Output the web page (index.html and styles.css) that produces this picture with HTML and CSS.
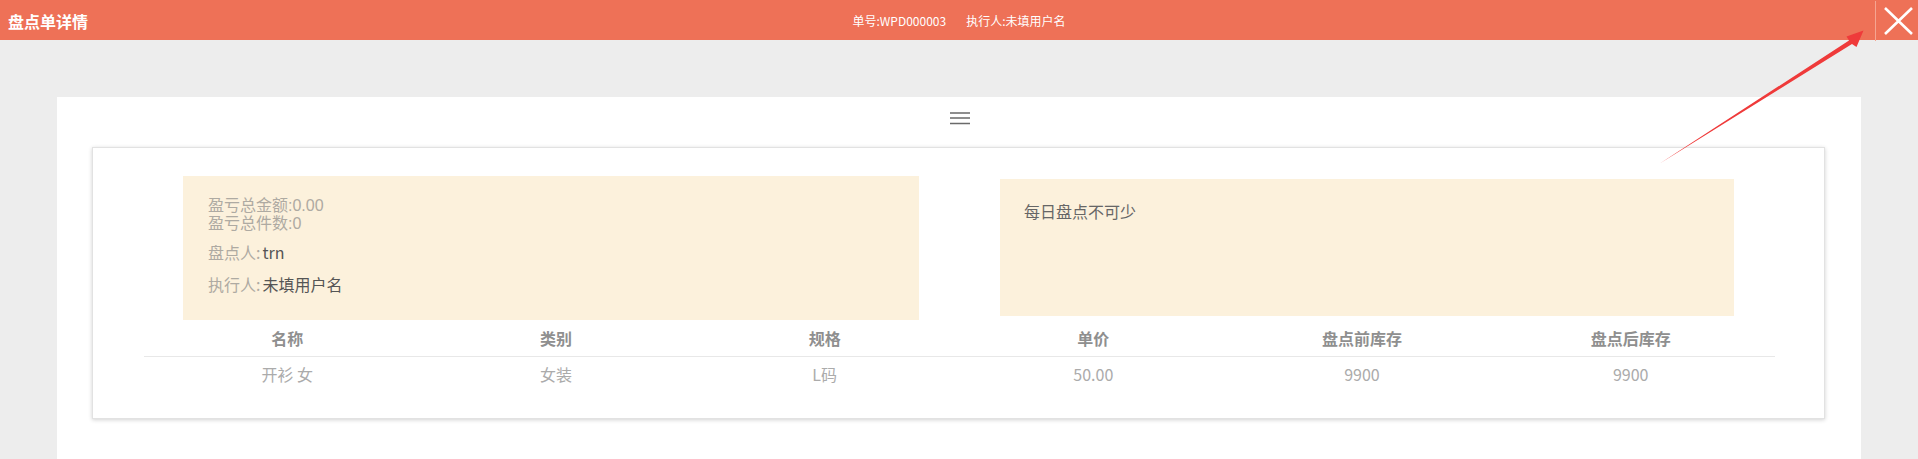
FILE: index.html
```html
<!DOCTYPE html>
<html lang="zh-CN">
<head>
<meta charset="utf-8">
<title>盘点单详情</title>
<link rel="stylesheet" href="styles.css">
</head>
<body>
<header class="topbar">
  <div class="title">盘点单详情</div>
  <div class="info">
    <span>单号:WPD000003</span>
    <span>执行人:未填用户名</span>
  </div>
  <div class="close">
    <svg width="43" height="40" viewBox="0 0 43 40"><path d="M10 7 L37 33 M37 7 L10 33" stroke="#fff" stroke-width="2.6" fill="none"/></svg>
  </div>
</header>
<main class="main">
  <section class="panel">
    <div class="menu">
      <svg width="22" height="13" viewBox="0 0 22 13"><path d="M1 1 H21 M1 6 H21 M1 11.5 H21" stroke="#6a6a6a" stroke-width="1.3" fill="none"/></svg>
    </div>
    <div class="card">
      <div class="boxes">
        <div class="box box-left">
          <div class="tight">
            <div class="muted">盈亏总金额:0.00</div>
            <div class="muted">盈亏总件数:0</div>
          </div>
          <div class="line"><span class="muted">盘点人:</span><span class="val">trn</span></div>
          <div class="line second"><span class="muted">执行人:</span><span class="val">未填用户名</span></div>
        </div>
        <div class="box box-right">
          <div class="note">每日盘点不可少</div>
        </div>
      </div>
      <div class="table">
        <div class="row head">
          <div>名称</div><div>类别</div><div>规格</div><div>单价</div><div>盘点前库存</div><div>盘点后库存</div>
        </div>
        <div class="row body">
          <div>开衫 女</div><div>女装</div><div>L码</div><div>50.00</div><div>9900</div><div>9900</div>
        </div>
      </div>
    </div>
  </section>
</main>
<svg class="arrow" width="1918" height="459" viewBox="0 0 1918 459">
  <polygon points="1659,164 1849,40.5 1846.5,36.5 1863.5,30.5 1856.5,47 1852,44" fill="#ef3a3a"/>
</svg>
</body>
</html>
```
FILE: styles.css
```css
* { box-sizing: border-box; }
html, body { margin: 0; padding: 0; }
body {
  position: relative;
  background: #ededed;
  font-family: "Noto Sans CJK SC", "Liberation Sans", sans-serif;
  overflow: hidden;
  height: 459px;
}
.topbar {
  height: 40px;
  background: #ee7157;
  display: grid;
  grid-template-columns: 1fr auto 1fr;
  align-items: center;
  color: #fff;
}
.title {
  padding-left: 8px;
  font-size: 16px;
  font-weight: bold;
  line-height: 40px;
}
.info {
  display: flex;
  gap: 20px;
  font-size: 12px;
  line-height: 40px;
  padding-top: 1px;
}
.close {
  justify-self: end;
  width: 43px;
  height: 40px;
  border-left: 1px solid #f5a591;
  display: flex;
}
.close svg { display: block; margin-left: -1px; }
.main {
  padding: 57px 57px 0;
}
.panel {
  background: #fff;
  padding: 15px 36px 60px 35px;
}
.menu {
  display: flex;
  justify-content: center;
  height: 13px;
  padding-left: 2px;
}
.menu svg { display: block; }
.card {
  margin-top: 22px;
  background: #fff;
  border: 1px solid #e2e2e2;
  box-shadow: 0 1px 4px rgba(0,0,0,0.18);
  padding: 28px 0 27px;
}
.boxes {
  display: flex;
  align-items: flex-start;
  gap: 81px;
  padding: 0 90px 0 90px;
}
.box {
  flex: 1;
  background: #fcf1dc;
}
.box-left {
  height: 144px;
  padding: 21px 25px 0;
  font-size: 16px;
}
.tight {
  font-family: "Liberation Sans", "Noto Sans CJK SC", sans-serif;
  line-height: 18px;
}
.muted { color: #aeaaa2; }
.val { color: #555; margin-left: 2px; }
.line { line-height: 20px; margin-top: 9px; }
.line.second { margin-top: 12px; }
.box-right {
  height: 137px;
  margin-top: 3px;
  padding: 22px 24px 0;
}
.note {
  font-size: 16px;
  line-height: 20px;
  color: #666;
}
.table {
  margin: 0 49px 0 51px;
}
.row {
  display: grid;
  grid-template-columns: repeat(6, 1fr);
  padding: 0 10px 0 9px;
  text-align: center;
  font-size: 16px;
}
.row.head {
  height: 37px;
  line-height: 37px;
  font-weight: bold;
  color: #8f8f8f;
  border-bottom: 1px solid #e8e8e8;
}
.row.body {
  line-height: 34px;
  color: #ababab;
}
.arrow {
  position: absolute;
  left: 0;
  top: 0;
  pointer-events: none;
}
```
